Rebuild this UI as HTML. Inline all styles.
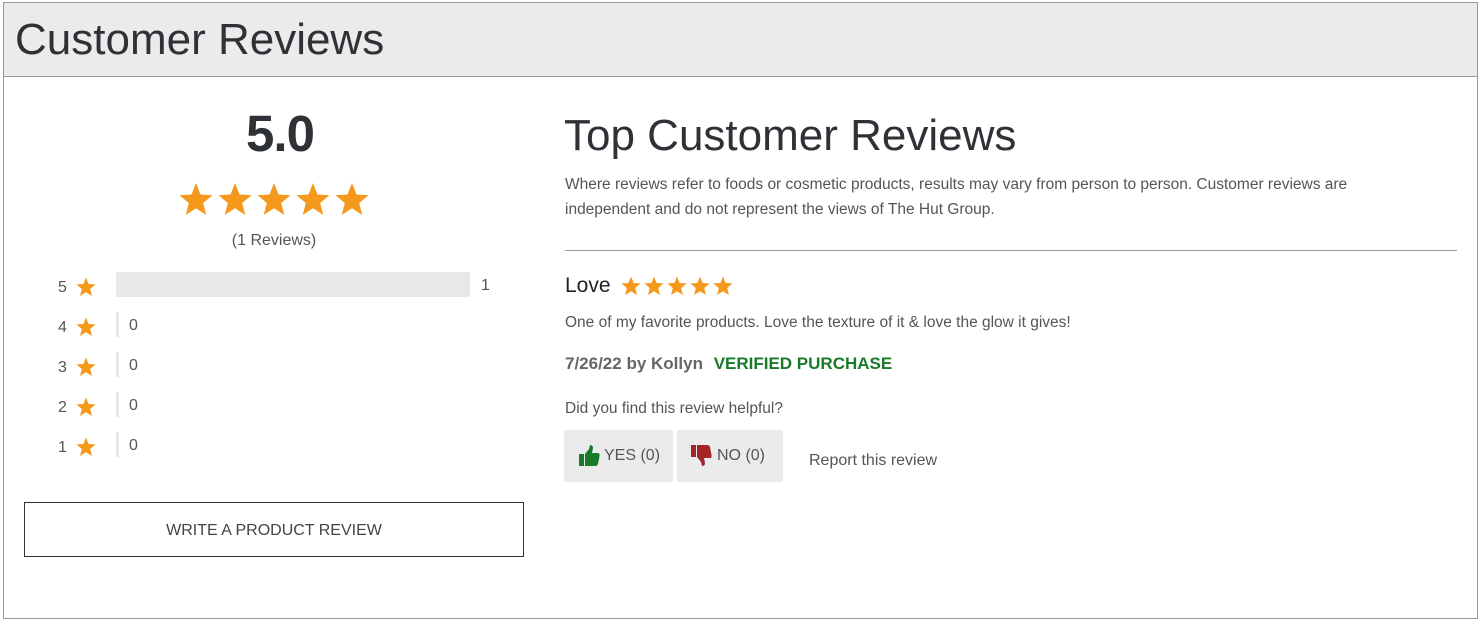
<!DOCTYPE html>
<html><head><meta charset="utf-8"><style>
*{margin:0;padding:0;box-sizing:border-box}
body{width:1481px;height:622px;background:#fff;font-family:"Liberation Sans",sans-serif;color:#333;position:relative;overflow:hidden}
.a{position:absolute;white-space:nowrap}
.box{position:absolute;left:3px;top:2px;width:1475px;height:617px;border:1px solid #999}
.hdr{position:absolute;left:4px;top:3px;width:1473px;height:74px;background:#ebebeb;border-bottom:1px solid #999}
svg.st{position:absolute}
.lbl{font-size:16px;color:#555}
</style></head><body>
<div class="box"></div>
<div class="hdr"></div>
<div class="a" style="left:15px;top:15px;font-size:44px;color:#2e3236">Customer Reviews</div>

<div class="a" style="left:230px;top:104px;width:100px;text-align:center;font-size:51px;font-weight:bold;color:#2e3236;letter-spacing:-1px">5.0</div>
<svg style="position:absolute;left:178px;top:182px" width="192" height="36" viewBox="0 0 192 36">
<defs><polygon id="s" points="18,1 22.5,12.5 34.5,13.2 25.2,21 28.3,33 18,26.3 7.7,33 10.8,21 1.5,13.2 13.5,12.5"/></defs>
<use href="#s" x="0" fill="#f5991d"/><use href="#s" x="39" fill="#f5991d"/><use href="#s" x="78" fill="#f5991d"/><use href="#s" x="117" fill="#f5991d"/><use href="#s" x="156" fill="#f5991d"/>
</svg>
<div class="a" style="left:200px;top:232px;width:148px;text-align:center;font-size:16px;color:#555">(1 Reviews)</div>

<svg width="0" height="0" style="position:absolute"><defs><polygon id="t" points="10,0.5 12.6,7 19.6,7.4 14.2,12 16,19 10,15.2 4,19 5.8,12 0.4,7.4 7.4,7"/></defs></svg>

<div class="a lbl" style="left:58px;top:279px">5</div>
<svg class="st" style="left:76px;top:277px" width="20" height="20"><use href="#t" fill="#f5991d"/></svg>
<div class="a" style="left:116px;top:272px;width:354px;height:25px;background:#e8e8e8"></div>
<div class="a lbl" style="left:481px;top:277px">1</div>

<div class="a lbl" style="left:58px;top:319px">4</div>
<svg class="st" style="left:76px;top:317px" width="20" height="20"><use href="#t" fill="#f5991d"/></svg>
<div class="a" style="left:116px;top:312px;width:3px;height:25px;background:#e8e8e8"></div>
<div class="a lbl" style="left:129px;top:317px">0</div>

<div class="a lbl" style="left:58px;top:359px">3</div>
<svg class="st" style="left:76px;top:357px" width="20" height="20"><use href="#t" fill="#f5991d"/></svg>
<div class="a" style="left:116px;top:352px;width:3px;height:25px;background:#e8e8e8"></div>
<div class="a lbl" style="left:129px;top:357px">0</div>

<div class="a lbl" style="left:58px;top:399px">2</div>
<svg class="st" style="left:76px;top:397px" width="20" height="20"><use href="#t" fill="#f5991d"/></svg>
<div class="a" style="left:116px;top:392px;width:3px;height:25px;background:#e8e8e8"></div>
<div class="a lbl" style="left:129px;top:397px">0</div>

<div class="a lbl" style="left:58px;top:439px">1</div>
<svg class="st" style="left:76px;top:437px" width="20" height="20"><use href="#t" fill="#f5991d"/></svg>
<div class="a" style="left:116px;top:432px;width:3px;height:25px;background:#e8e8e8"></div>
<div class="a lbl" style="left:129px;top:437px">0</div>

<div class="a" style="left:24px;top:502px;width:500px;height:55px;border:1px solid #333;text-align:center;line-height:55px;font-size:16px;color:#444">WRITE A PRODUCT REVIEW</div>

<div class="a" style="left:564px;top:111px;font-size:44px;color:#2e3236">Top Customer Reviews</div>
<div class="a" style="left:565px;top:172px;font-size:15.5px;line-height:25px;color:#555;white-space:normal;width:850px">Where reviews refer to foods or cosmetic products, results may vary from person to person. Customer reviews are independent and do not represent the views of The Hut Group.</div>
<div class="a" style="left:565px;top:250px;width:892px;height:1px;background:#999"></div>

<div class="a" style="left:565px;top:274px;font-size:21px;color:#222">Love</div>
<svg style="position:absolute;left:621px;top:276px" width="115" height="20"><use href="#t" fill="#f5991d"/><use href="#t" x="23" fill="#f5991d"/><use href="#t" x="46" fill="#f5991d"/><use href="#t" x="69" fill="#f5991d"/><use href="#t" x="92" fill="#f5991d"/></svg>
<div class="a" style="left:565px;top:314px;font-size:15.5px;color:#555">One of my favorite products. Love the texture of it &amp; love the glow it gives!</div>
<div class="a" style="left:565px;top:354px;font-size:17px;color:#666;font-weight:bold">7/26/22 by Kollyn <span style="color:#1a7a2a;margin-left:6px">VERIFIED PURCHASE</span></div>
<div class="a" style="left:565px;top:400px;font-size:15.5px;color:#555">Did you find this review helpful?</div>

<div class="a" style="left:564px;top:430px;width:109px;height:52px;background:#ebebeb"></div>
<svg style="position:absolute;left:579px;top:445px" width="21" height="22" viewBox="0 0 21 22"><rect x="0" y="9" width="5" height="12" fill="#1a7a2a"/><path d="M6 9 L10 4 L11 0 Q14 0 14 3 L13 8 L19 8 Q21 8 20.5 11 L19 19 Q18.5 21 16 21 L6 21 Z" fill="#1a7a2a"/></svg>
<div class="a" style="left:604px;top:447px;font-size:16px;color:#555">YES (0)</div>

<div class="a" style="left:677px;top:430px;width:106px;height:52px;background:#ebebeb"></div>
<svg style="position:absolute;left:691px;top:444px" width="21" height="22" viewBox="0 0 21 22"><rect x="0" y="1" width="5" height="12" fill="#a32626"/><path d="M6 13 L10 18 L11 22 Q14 22 14 19 L13 14 L19 14 Q21 14 20.5 11 L19 3 Q18.5 1 16 1 L6 1 Z" fill="#a32626"/></svg>
<div class="a" style="left:717px;top:447px;font-size:16px;color:#555">NO (0)</div>

<div class="a" style="left:809px;top:452px;font-size:16px;color:#555">Report this review</div>
</body></html>
